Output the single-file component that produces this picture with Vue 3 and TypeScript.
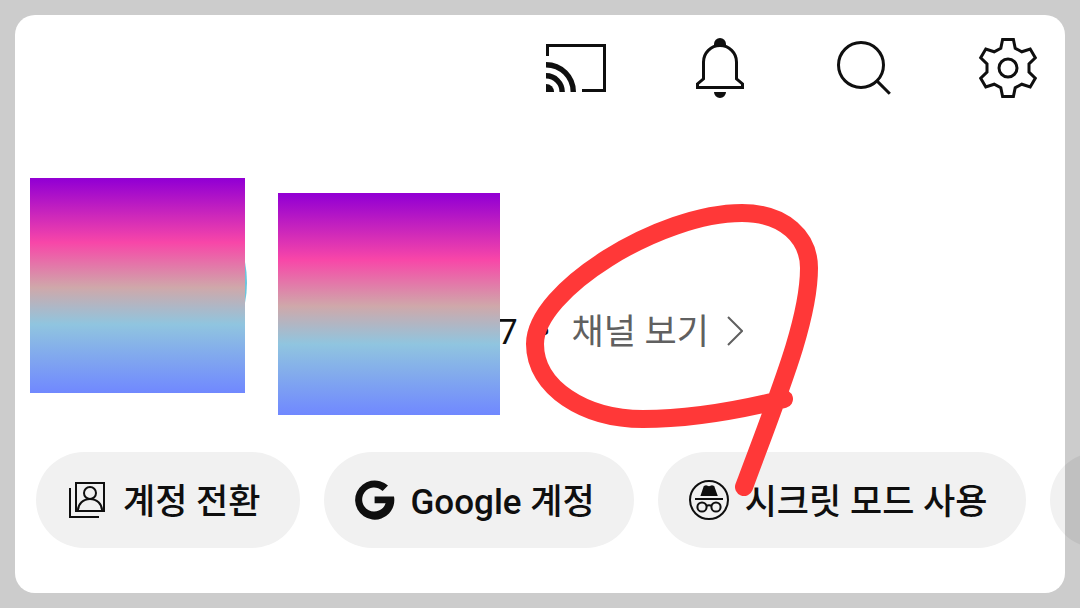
<script setup lang="ts">
type IconName = 'switch' | 'google' | 'incognito'

interface Chip {
  icon: IconName
  label: string
}

const chips: Chip[] = [
  { icon: 'switch', label: '계정 전환' },
  { icon: 'google', label: 'Google 계정' },
  { icon: 'incognito', label: '시크릿 모드 사용' },
]
</script>

<template>
  <main class="page">
    <header class="toolbar">
      <button type="button" class="tool">
        <svg viewBox="0 0 24 24" aria-hidden="true">
          <path class="line" d="M2.5 8V4.5h19v15H14" />
          <path d="M2 17.3a2.7 2.7 0 0 1 2.7 2.7H2z" />
          <path class="line" stroke-width="1.8" d="M2 14.6a5.4 5.4 0 0 1 5.4 5.4" />
          <path class="line" stroke-width="1.8" d="M2 10.9a9.1 9.1 0 0 1 9.1 9.1" />
        </svg>
      </button>
      <button type="button" class="tool">
        <svg viewBox="0 0 24 24" aria-hidden="true">
          <path class="line" d="M6.5 10a5.5 5.5 0 0 1 11 0v5.6l2 1.7v1.2h-15v-1.2l2-1.7z" />
          <path d="M10 4.7V4a2 2 0 0 1 4 0v.7q-2-.6-4 0zM10 20h4a2 2 0 0 1-4 0z" />
        </svg>
      </button>
      <button type="button" class="tool">
        <svg viewBox="0 0 24 24" aria-hidden="true">
          <circle class="line" cx="11" cy="11" r="7.5" />
          <path class="line" d="M16.3 16.3l4.3 4.3" />
        </svg>
      </button>
      <button type="button" class="tool">
        <svg viewBox="0 0 24 24" aria-hidden="true">
          <circle class="line" cx="12" cy="12" r="3" />
          <path
            class="line"
            d="M10.2 2.5h3.6l.6 2.9 2.2 1.2 2.8-.9 1.7 2.9-2.1 2v2.8l2.1 2-1.7 2.9-2.8-.9-2.2 1.2-.6 2.9h-3.6l-.6-2.9-2.2-1.2-2.8.9-1.7-2.9 2.1-2v-2.8l-2.1-2 1.7-2.9 2.8.9 2.2-1.2z"
          />
        </svg>
      </button>
    </header>

    <section class="profile">
      <div class="avatar"><div class="shade"></div></div>
      <div class="shade name"></div>
      <p class="handle">
        <span class="digit">7</span>
        <span class="dot">•</span>
        <a href="#" class="channel">
          채널 보기
          <svg viewBox="0 0 16 30" aria-hidden="true"><path d="M1 1l14 14L1 29" /></svg>
        </a>
      </p>
    </section>

    <nav class="chips">
      <button v-for="chip in chips" :key="chip.label" type="button" class="chip">
        <svg v-if="chip.icon === 'switch'" viewBox="0 0 24 24" aria-hidden="true">
          <path class="line" d="M3.5 6v14.5H18M6.5 3.5h14v14h-14z" />
          <circle class="line" cx="13.5" cy="8.5" r="3" />
          <path class="line" d="M7.5 17.3c0-3.3 2.6-5.8 6-5.8s6 2.5 6 5.8" />
        </svg>
        <svg v-else-if="chip.icon === 'google'" viewBox="0 0 24 24" aria-hidden="true">
          <path
            d="M18.5 4.8l-2.7 2.7A6 6 0 1 0 17.3 13.6H11.8v-3.4h9.7A9.8 9.8 0 1 1 18.5 4.8z"
          />
        </svg>
        <svg v-else viewBox="0 0 24 24" aria-hidden="true">
          <circle class="line" cx="12" cy="12" r="9.5" />
          <path d="M7.7 10l1.7-5 1.1-.4 1.5.5 1.5-.5 1.1.4 1.8 5z" />
          <path class="line" d="M5 11.5h14M10.5 15q1.5-.7 3 0" />
          <circle class="line" cx="8.5" cy="15.5" r="2.3" />
          <circle class="line" cx="15.5" cy="15.5" r="2.3" />
        </svg>
        <span class="label">{{ chip.label }}</span>
      </button>
      <div class="chip more"></div>
    </nav>

    <svg class="scribble" viewBox="0 0 300 300" aria-hidden="true">
      <path
        d="M264 199C220 210 170 219 123 219C65 219 15 188 15 144C15 90 140 13 222 13C265 13 289 38 289 68C289 120 260 190 224 287"
      />
    </svg>
    <div class="frame"></div>
  </main>
</template>

<style>
body {
  margin: 0;
}
</style>

<style scoped>
.page {
  position: relative;
  box-sizing: border-box;
  min-height: 100vh;
  padding: 32px 0 60px;
  overflow: hidden;
  background: #fff;
  color: #0f0f0f;
  font: 400 35px/48px Roboto, 'Noto Sans CJK KR', sans-serif;
}

button {
  padding: 0;
  border: 0;
  background: none;
  color: inherit;
  font: inherit;
  cursor: pointer;
}

svg {
  display: block;
  flex: none;
  fill: currentColor;
}

.line {
  fill: none;
  stroke: currentColor;
}

.toolbar {
  display: flex;
  justify-content: flex-end;
  gap: 72px;
  padding: 0 36px;
}

.tool svg {
  width: 72px;
  height: 72px;
}

.profile {
  display: flex;
  align-items: flex-start;
  margin-top: 74px;
  padding-left: 30px;
}

.shade {
  position: relative;
  width: 215px;
  height: 215px;
  background: linear-gradient(#9400d3 1%, #f846a8 30%, #cfa8aa 51%, #90c5df 68%, #7088ff);
}

.avatar {
  position: relative;
}

.avatar::before {
  content: '';
  position: absolute;
  inset: 0 -2px 6px 8px;
  border-radius: 50%;
  background: #6cc5dc;
}

.name {
  width: 222px;
  height: 222px;
  margin: 15px 0 0 33px;
}

.handle {
  display: flex;
  align-items: center;
  margin: 131px 0 0;
}

.digit {
  margin-left: -2px;
}

.dot {
  margin: 0 21px;
}

.channel {
  display: flex;
  align-items: center;
  gap: 18px;
  color: #606060;
  text-decoration: none;
}

.channel svg {
  width: 16px;
  height: 30px;
  margin-bottom: 4px;
  fill: none;
  stroke: currentColor;
  stroke-width: 2;
}

.chips {
  display: flex;
  gap: 24px;
  margin-top: 37px;
  padding-left: 36px;
}

.chip {
  display: flex;
  flex: none;
  align-items: center;
  gap: 12px;
  height: 96px;
  padding: 0 39px 0 27px;
  border-radius: 48px;
  background: #f1f1f1;
  font-weight: 500;
  white-space: nowrap;
}

.chip svg {
  width: 48px;
  height: 48px;
}

.label {
  padding-top: 6px;
}

.more {
  width: 240px;
}

.scribble {
  position: absolute;
  top: 200px;
  left: 520px;
  width: 300px;
  height: 300px;
  fill: none;
  stroke: #ff3838;
  stroke-width: 18;
  stroke-linecap: round;
  pointer-events: none;
}

.frame {
  position: absolute;
  inset: 15px;
  border-radius: 20px;
  box-shadow: 0 0 0 30px rgba(0, 0, 0, 0.2);
  pointer-events: none;
}
</style>
